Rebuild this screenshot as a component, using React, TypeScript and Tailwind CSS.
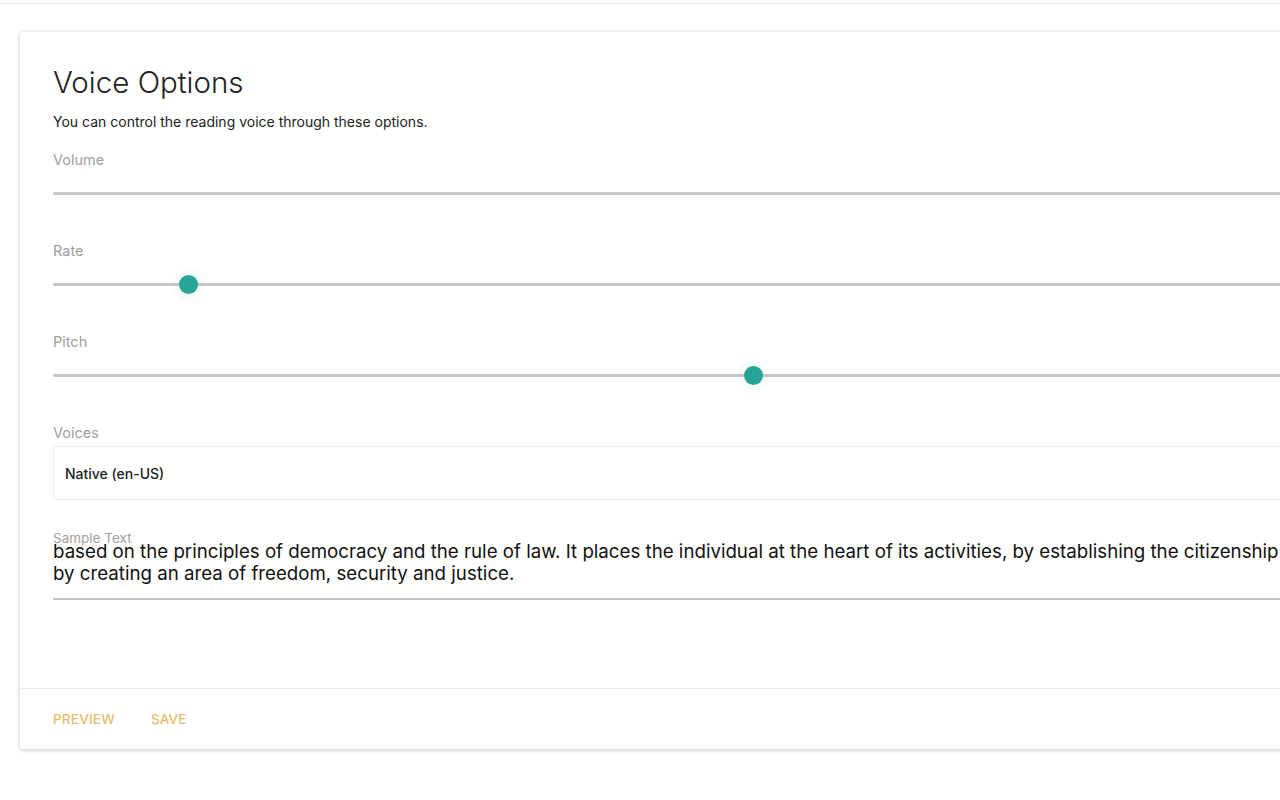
import React from "react";

function Slider({ label, pos }: { label: string; pos?: number }) {
  return (
    <div className="mb-[25px]">
      <div className="h-[20px] flex items-center text-[14.5px] text-[#9e9e9e]">{label}</div>
      <div className="relative h-[46px] flex items-center">
        <div className="w-full h-[3px] bg-[#c8c8c8] rounded-full" />
        {pos !== undefined && (
          <div
            className="absolute top-1/2 w-[19px] h-[19px] -mt-[9.5px] -ml-[9.5px] rounded-full bg-[#26a495] shadow-[0_0_0_6px_rgba(38,164,149,0.04)]"
            style={{ left: pos }}
          />
        )}
      </div>
    </div>
  );
}

export default function App() {
  return (
    <div className="w-[1280px] h-[800px] overflow-hidden bg-white" style={{ fontFamily: "Inter, 'Noto Sans', sans-serif" }}>
      <div className="h-[4px] border-b border-[#e6e6e6]" />
      <div className="ml-[20px] mt-[28px] w-[1400px] bg-white rounded-[3px] shadow-[0_1px_4px_rgba(0,0,0,0.25)]">
        <div className="pl-[33px] pr-[40px] pt-[33px]">
          <h1 className="text-[29.5px] leading-[34px] font-light text-[#222]">Voice Options</h1>
          <p className="mt-[15px] text-[14px] leading-[16px] text-[#222]">You can control the reading voice through these options.</p>
          <div className="mt-[20px]">
            <Slider label="Volume" />
            <Slider label="Rate" pos={135} />
            <Slider label="Pitch" pos={700} />
            <div className="h-[20px] flex items-center text-[14.5px] text-[#9e9e9e]">Voices</div>
            <div className="mt-[3px] h-[54px] border border-[#ececec] rounded-[4px] flex items-center pl-[11px] text-[14px] font-medium text-[#222]">
              Native (en-US)
            </div>
            <div className="relative mt-[41px] pb-[13px] border-b-2 border-[#c4c4c4]">
              <div className="absolute left-0 -top-[10px] text-[13.5px] leading-[14px] text-[#a0a0a0]">Sample Text</div>
              <div className="text-[18.7px] leading-[22px] text-[#111] whitespace-nowrap">
                based on the principles of democracy and the rule of law. It places the individual at the heart of its activities, by establishing the citizenship of the Union,
              </div>
              <div className="text-[18.7px] leading-[22px] text-[#111] whitespace-nowrap">
                by creating an area of freedom, security and justice.
              </div>
            </div>
          </div>
        </div>
        <div className="mt-[88px] border-t border-[#ececec] h-[61px] flex items-center pl-[33px] gap-[36px]">
          <span className="text-[13.5px] font-medium tracking-[0.2px] text-[#e8bb6c]">PREVIEW</span>
          <span className="text-[13.5px] font-medium tracking-[0.2px] text-[#e8bb6c]">SAVE</span>
        </div>
      </div>
    </div>
  );
}
